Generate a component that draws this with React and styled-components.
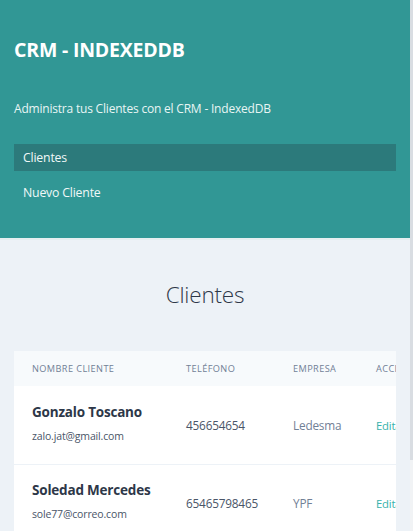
import React from 'react';
import styled, { createGlobalStyle } from 'styled-components';

const GlobalStyle = createGlobalStyle`
  html, body {
    margin: 0;
    padding: 0;
    background: #edf2f7;
    font-family: "Open Sans", "Noto Sans", sans-serif;
  }
  * { box-sizing: border-box; }
`;

const Shell = styled.div`
  display: flex;
  height: 531px;
  overflow: hidden;
`;

const Page = styled.div`
  flex: 1;
  min-width: 0;
  display: flex;
  flex-direction: column;
`;

const ScrollTrack = styled.div`
  width: 3px;
  display: flex;
  flex-direction: column;
  background: #f1f3f5;
`;

const ScrollThumb = styled.div`
  height: 460px;
  background: #d9dde2;
`;

const Header = styled.header`
  flex-shrink: 0;
  background-color: #319795;
  height: 240px;
  padding: 38px 14px 0;
  color: #fff;
  border-bottom: 2px solid #e6eef0;
`;

const Title = styled.h1`
  margin: 0;
  font-size: 19.5px;
  font-weight: 700;
  letter-spacing: -0.2px;
  line-height: 24px;
`;

const Subtitle = styled.p`
  margin: 38px 0 0;
  font-size: 12px;
  letter-spacing: -0.2px;
  line-height: 18px;
  color: #e8f5f4;
`;

const Nav = styled.nav`
  display: flex;
  flex-direction: column;
  gap: 8px;
  margin-top: 26px;
`;

const NavItem = styled.a`
  display: block;
  height: 27px;
  line-height: 27px;
  padding: 0 9px;
  font-size: 12.3px;
  letter-spacing: -0.2px;
  color: #f0f8f8;
  text-decoration: none;
  background-color: ${props => (props.active ? '#2c7a7b' : 'transparent')};
`;

const Main = styled.main`
  flex: 1;
  padding: 0 14px;
`;

const Heading = styled.h2`
  margin: 38px 0 0;
  text-align: center;
  font-size: 22.5px;
  font-weight: 300;
  letter-spacing: -0.2px;
  line-height: 34px;
  color: #2d3748;
`;

const TableWrap = styled.div`
  margin-top: 39px;
  width: 382px;
  overflow: hidden;
`;

const Table = styled.table`
  border-collapse: collapse;
  white-space: nowrap;
`;

const HeadCell = styled.th`
  background: #f7fafc;
  height: 35px;
  padding: 0 0 0 18px;
  text-align: left;
  font-size: 9.2px;
  font-weight: 400;
  letter-spacing: 0.4px;
  text-transform: uppercase;
  color: #718096;
  width: ${props => props.w}px;
  min-width: ${props => props.w}px;
`;

const Row = styled.tr`
  background: #fff;
  border-bottom: 1px solid #edf2f7;
`;

const Cell = styled.td`
  height: 78px;
  padding: 0 0 ${props => (props.lift ? '4px' : '0')} 18px;
  vertical-align: middle;
  font-size: 11.8px;
  letter-spacing: -0.2px;
  color: ${props => props.color || '#4a5568'};
`;

const Name = styled.div`
  font-size: 13.5px;
  font-weight: 700;
  letter-spacing: -0.2px;
  color: #2d3748;
  line-height: 20px;
`;

const Email = styled.div`
  margin-top: 6px;
  font-size: 10.5px;
  letter-spacing: -0.15px;
  color: #4a5568;
  line-height: 16px;
`;

const Action = styled.a`
  font-size: 11.3px;
  color: #38b2ac;
  text-decoration: none;
`;

const clientes = [
  { nombre: 'Gonzalo Toscano', email: 'zalo.jat@gmail.com', telefono: '456654654', empresa: 'Ledesma' },
  { nombre: 'Soledad Mercedes', email: 'sole77@correo.com', telefono: '65465798465', empresa: 'YPF' },
];

export default function App() {
  return (
    <>
      <GlobalStyle />
      <Shell>
        <Page>
          <Header>
            <Title>CRM - INDEXEDDB</Title>
            <Subtitle>Administra tus Clientes con el CRM - IndexedDB</Subtitle>
            <Nav>
              <NavItem href="#" active>Clientes</NavItem>
              <NavItem href="#">Nuevo Cliente</NavItem>
            </Nav>
          </Header>
          <Main>
            <Heading>Clientes</Heading>
            <TableWrap>
              <Table>
                <thead>
                  <tr>
                    <HeadCell w={154}>Nombre Cliente</HeadCell>
                    <HeadCell w={107}>Teléfono</HeadCell>
                    <HeadCell w={83}>Empresa</HeadCell>
                    <HeadCell w={120}>Acciones</HeadCell>
                  </tr>
                </thead>
                <tbody>
                  {clientes.map(c => (
                    <Row key={c.email}>
                      <Cell lift>
                        <Name>{c.nombre}</Name>
                        <Email>{c.email}</Email>
                      </Cell>
                      <Cell>{c.telefono}</Cell>
                      <Cell color="#718096">{c.empresa}</Cell>
                      <Cell>
                        <Action href="#">Editar</Action>
                      </Cell>
                    </Row>
                  ))}
                </tbody>
              </Table>
            </TableWrap>
          </Main>
        </Page>
        <ScrollTrack>
          <ScrollThumb />
        </ScrollTrack>
      </Shell>
    </>
  );
}
